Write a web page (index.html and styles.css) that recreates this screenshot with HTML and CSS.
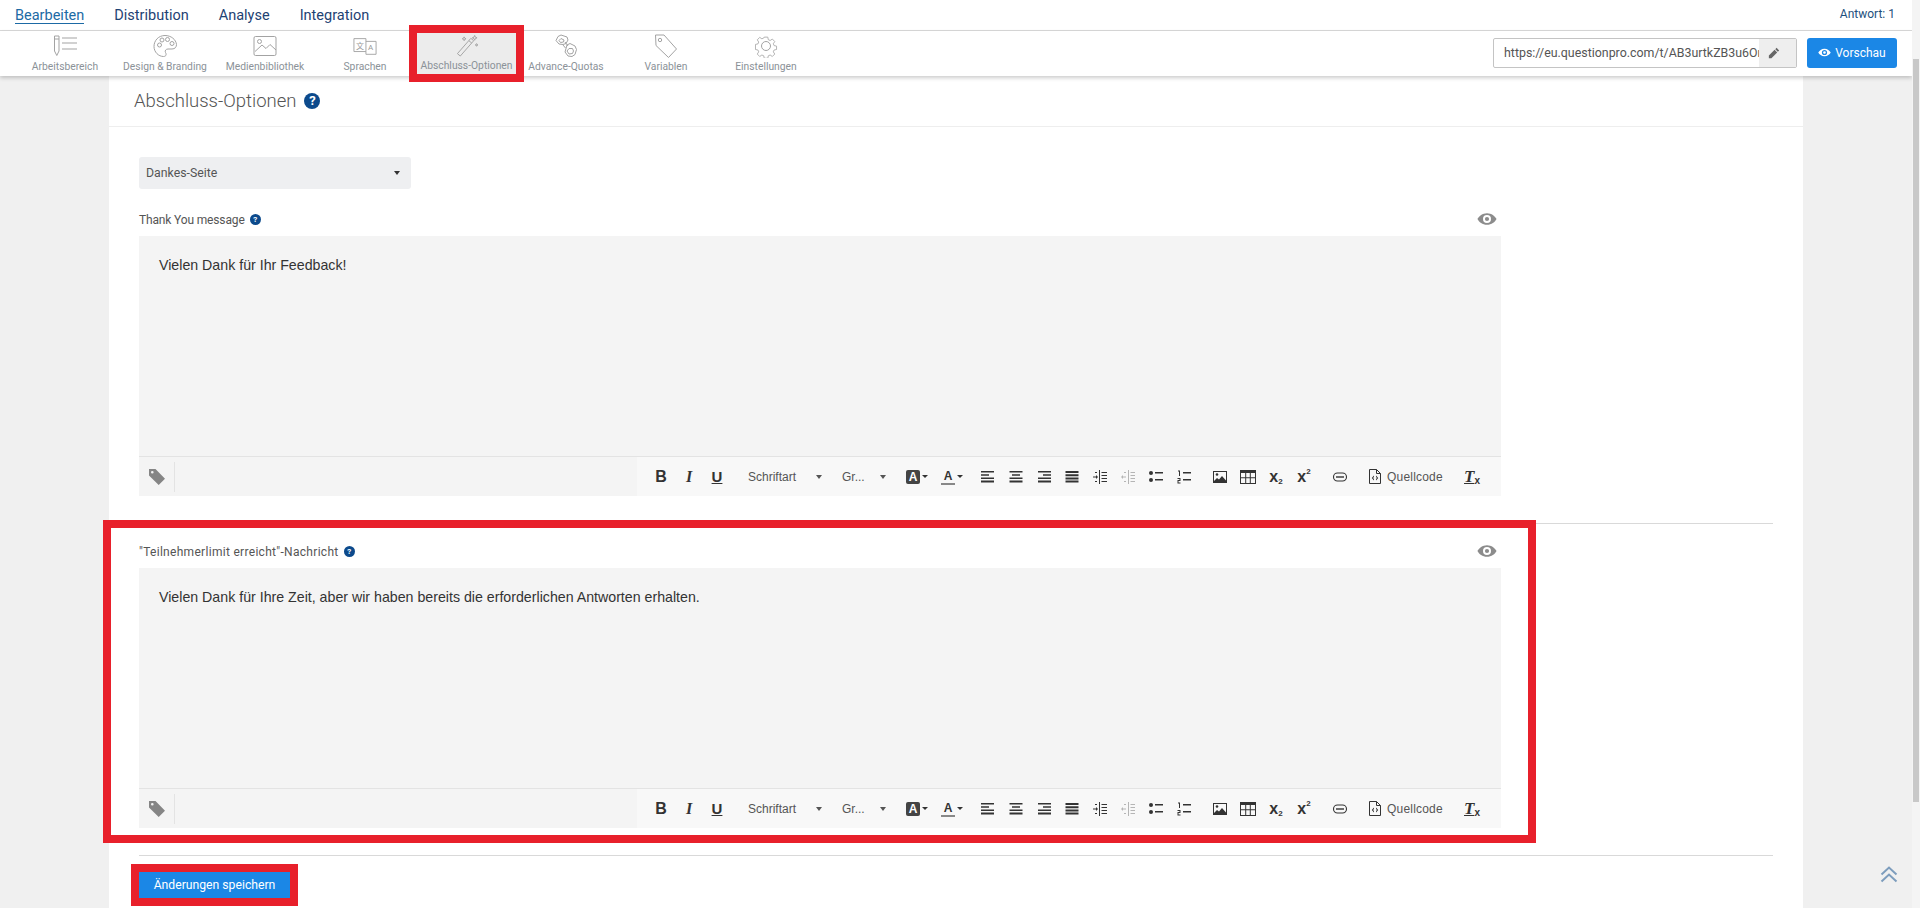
FILE: index.html
```html
<!DOCTYPE html>
<html lang="de">
  <head>
    <meta charset="UTF-8" />
    <title>Abschluss-Optionen</title>
    <meta name="viewport" content="width=device-width, initial-scale=1.0" />
    <link rel="stylesheet" href="styles.css">
  </head>
  <body>
    <svg class="sprite" width="0" height="0">
      <symbol id="i-eye" viewBox="0 0 24 16"><path fill-rule="evenodd" d="M12 1C6.500 1 2.500 4.500.5 8c2 3.500 6 7 11.500 7s9.500-3.500 11.500-7c-2-3.500-6-7-11.500-7zm0 2.200a4.800 4.800 0 1 1 0 9.600 4.800 4.800 0 0 1 0-9.600zm0 2.300a2.500 2.500 0 1 0 0 5 2.500 2.500 0 0 0 0-5z"/></symbol>
      <symbol id="i-tag" viewBox="0 0 18 18"><path fill-rule="evenodd" d="M1 1h6.500l9.500 9.700L10.700 17 1 7.500zm3.300 2a1.300 1.300 0 1 0 0 2.600 1.300 1.300 0 0 0 0-2.600z"/></symbol>
      <symbol id="i-left" viewBox="0 0 14 14"><path d="M0 1h13v1.500H0zM0 4.200h8v1.500H0zM0 7.400h13v1.500H0zM0 10.600h13v2H0z"/></symbol>
      <symbol id="i-center" viewBox="0 0 14 14"><path d="M.5 1h13v1.500H.5zM3 4.200h8v1.500H3zM.5 7.400h13v1.500H.5zM.5 10.600h13v2H.5z"/></symbol>
      <symbol id="i-right" viewBox="0 0 14 14"><path d="M1 1h13v1.500H1zM6 4.200h8v1.500H6zM1 7.400h13v1.500H1zM1 10.600h13v2H1z"/></symbol>
      <symbol id="i-justify" viewBox="0 0 14 14"><path d="M.5 1h13v2H.5zM.5 4.200h13v2H.5zM.5 7.400h13v2H.5zM.5 10.600h13v2H.5z"/></symbol>
      <symbol id="i-indent" viewBox="0 0 14 14"><path d="M6 0h1v14H6zM8.500 2H14v1H8.500zM8.500 5H14v1H8.500zM8.500 8H14v1H8.500zM8.500 11H14v1H8.500zM0 6.500h3V5l2 2-2 2V7.500H0zM2 2h2v1H2zM2 11h2v1H2z"/></symbol>
      <symbol id="i-outdent" viewBox="0 0 14 14"><path d="M7 0h1v14H7zM9.500 2H14v1H9.500zM9.500 5H14v1H9.500zM9.500 8H14v1H9.500zM9.500 11H14v1H9.500zM5 6.500H2V5L0 7l2 2V7.500h3zM3 2h2v1H3zM3 11h2v1H3z"/></symbol>
      <symbol id="i-ul" viewBox="0 0 14 14"><circle cx="2" cy="3" r="2"/><circle cx="2" cy="10" r="2"/><path d="M6 2h8v1.500H6zM6 9h8v1.500H6z"/></symbol>
      <symbol id="i-ol" viewBox="0 0 14 14"><path d="M6 2h8v1.500H6zM6 9h8v1.500H6zM1 .5h2V6H2V1.500H1zM.5 8h3v3h-2v1.500h2v1h-3V10h2V9h-2z"/></symbol>
      <symbol id="i-image" viewBox="0 0 14 12"><path fill-rule="evenodd" d="M0 0h14v12H0zm1 1v10h12V1z"/><circle cx="4" cy="3.500" r="1.300"/><path d="M1 10l3-3 2 1.500L9 5l4 4.500V11H1z"/></symbol>
      <symbol id="i-table" viewBox="0 0 16 14"><path fill-rule="evenodd" d="M0 0h16v14H0zm1 3v4.300h4.200V3zm5.200 0v4.300h3.600V3zm4.600 0v4.300H15V3zM1 8.300V13h4.200V8.300zm5.200 0V13h3.600V8.300zm4.600 0V13H15V8.300z"/></symbol>
      <symbol id="i-link" viewBox="0 0 16 14"><rect x="1.500" y="3" width="13" height="8" rx="4" fill="none" stroke="currentColor" stroke-width="1.100"/><path d="M4 6.300h8v1.400H4z"/></symbol>
      <symbol id="i-source" viewBox="0 0 12 15"><path fill="none" stroke="currentColor" d="M.5.500h7l4 4v10H.5zM7.500.500v4h4"/><path d="M5 6.500L2.800 9 5 11.500V10L4 9l1-1zM7 6.500L9.200 9 7 11.500V10l1-1-1-1z"/></symbol>
    </svg>

    <header class="topbar">
      <nav class="main-tabs">
        <a class="active">Bearbeiten</a>
        <a>Distribution</a>
        <a>Analyse</a>
        <a>Integration</a>
      </nav>
      <span class="answers">Antwort: 1</span>
    </header>

    <div class="toolbar">
      <div class="tool">
        <svg viewBox="0 0 24 24"><path d="M1.500 2h4.500v15l-2.200 4.500L1.500 17zM1.500 5h4.500M9 4h15M9 9h15M9 15h15"/></svg>
        <span>Arbeitsbereich</span>
      </div>
      <div class="tool">
        <svg viewBox="0 0 24 24"><path d="M12 1.500C5.500 1.500 1 6.500 1 12.500c0 5.500 4.500 10 9.500 10 3 0 3-2.500 2-4-1-1.800.5-3.500 2.500-3.500h4c3 0 4.500-2 4.500-4.500C23 5.500 18 1.500 12 1.500z"/><circle cx="6.500" cy="11" r="2"/><circle cx="9" cy="6" r="2"/><circle cx="14.500" cy="5.500" r="2"/><circle cx="19" cy="9.500" r="2"/></svg>
        <span>Design &amp; Branding</span>
      </div>
      <div class="tool">
        <svg viewBox="0 0 24 24"><rect x="1" y="2.500" width="22" height="19" rx="1.500"/><circle cx="6.500" cy="7.500" r="2"/><path d="M2 17.500l7-6.500 4 3.500 4-4 6 5.500"/></svg>
        <span>Medienbibliothek</span>
      </div>
      <div class="tool">
        <svg viewBox="0 0 26 24"><path d="M1 4h13v14H1zM14 7h11v14H14v-3"/></svg>
        <b class="cjk">文</b><b class="lat">A</b>
        <span>Sprachen</span>
      </div>
      <div class="tool current">
        <svg viewBox="0 0 24 24"><path d="M2 20.500L16 4.500l3 2.500L5 23zM14 7l3 2.500M20 1.500l.7 1.800 1.800.7-1.800.7-.7 1.800-.7-1.800-1.800-.7 1.800-.7zM9 3l.6 1.400L11 5l-1.400.6L9 7l-.6-1.400L7 5l1.400-.6zM22 10l.4 1 1 .4-1 .4-.4 1-.4-1-1-.4 1-.4z"/></svg>
        <span>Abschluss-Optionen</span>
      </div>
      <div class="tool">
        <svg viewBox="0 0 24 24"><path d="M4 2.500l3-1.500 6 2 1 3-2 3.500-3 1-4-.5-3-3.500zM7 4.500l-2 2 1.500 2 3-.5.500-2zM13 11l3-1.500 5 2.500 1.500 3.500-1.500 5-3 2-4-.5-3-4zM15 14.500l-2 2.500 2 3 3.500-.5 1-2.500-1-2.500zM11 8l3 4M9 11l2.500 3"/></svg>
        <span>Advance-Quotas</span>
      </div>
      <div class="tool">
        <svg viewBox="0 0 24 24"><path d="M1.500 1h8.500l12.500 14-8 8.500L2 11.500z"/><circle cx="6" cy="6" r="1.700"/></svg>
        <span>Variablen</span>
      </div>
      <div class="tool">
        <svg viewBox="0 0 24 24"><circle cx="12" cy="12" r="4.500"/><path d="M9.800 1h4.400l.6 3.200 2.300 1 2.700-1.800 3 3.100-1.800 2.700 1 2.300 3 .6v4.200l-3 .6-1 2.300 1.800 2.700-3 3-2.700-1.800-2.300 1-.6 3H9.800l-.6-3-2.300-1-2.700 1.800-3-3 1.800-2.700-1-2.300-3-.6V10l3-.6 1-2.300-1.800-2.700 3-3.100 2.700 1.800 2.300-1z" transform="translate(2.300 2.300) scale(.81)"/></svg>
        <span>Einstellungen</span>
      </div>

      <div class="url-box">
        <span class="url-text">https://eu.questionpro.com/t/AB3urtkZB3u6Om</span>
        <span class="url-edit">
          <svg viewBox="0 0 14 14"><path d="M10 1l3 3-1.500 1.500-3-3zM7.700 3.300l3 3L4 13H1v-3z"/></svg>
        </span>
      </div>
      <button class="preview-btn">
        <svg class="eye"><use href="#i-eye"/></svg>
        Vorschau
      </button>
    </div>

    <main class="card">
      <div class="card-title">
        <h1>Abschluss-Optionen</h1>
        <span class="help big">?</span>
      </div>

      <div class="card-body">
        <div class="select-box">
          <span>Dankes-Seite</span>
          <i class="caret"></i>
        </div>

        <div class="field-head first">
          <label>Thank You message</label>
          <span class="help">?</span>
          <svg class="field-eye"><use href="#i-eye"/></svg>
        </div>
        <div class="editor">
          <div class="editor-text">Vielen Dank für Ihr Feedback!</div>
          <div class="editor-foot">
            <div class="tag-slot"><svg><use href="#i-tag"/></svg></div>
            <div class="rte">
              <span class="rb txt-b">B</span><span class="rb txt-i">I</span><span class="rb txt-u">U</span>
              <span class="rcombo font">Schriftart<i class="caret"></i></span>
              <span class="rcombo size">Gr...<i class="caret"></i></span>
              <span class="rcolor bg"><b>A</b><i class="caret"></i></span>
              <span class="rcolor fg"><b>A</b><i class="caret"></i></span>
              <span class="rb"><svg><use href="#i-left"/></svg></span>
              <span class="rb"><svg><use href="#i-center"/></svg></span>
              <span class="rb"><svg><use href="#i-right"/></svg></span>
              <span class="rb"><svg><use href="#i-justify"/></svg></span>
              <span class="rb"><svg><use href="#i-indent"/></svg></span>
              <span class="rb off"><svg><use href="#i-outdent"/></svg></span>
              <span class="rb"><svg><use href="#i-ul"/></svg></span>
              <span class="rb"><svg><use href="#i-ol"/></svg></span>
              <span class="rb gap"><svg><use href="#i-image"/></svg></span>
              <span class="rb"><svg class="wide"><use href="#i-table"/></svg></span>
              <span class="rb txt-x">x<sub>2</sub></span>
              <span class="rb txt-x">x<sup>2</sup></span>
              <span class="rb gap"><svg class="wide"><use href="#i-link"/></svg></span>
              <span class="rsource"><svg><use href="#i-source"/></svg>Quellcode</span>
              <span class="rb txt-t"><u>T</u><small>x</small></span>
            </div>
          </div>
        </div>

        <hr class="divider first-line" />

        <section class="limit-block">
          <div class="field-head">
            <label class="spaced">"Teilnehmerlimit erreicht"-Nachricht</label>
            <span class="help">?</span>
            <svg class="field-eye"><use href="#i-eye"/></svg>
          </div>
          <div class="editor">
            <div class="editor-text">Vielen Dank für Ihre Zeit, aber wir haben bereits die erforderlichen Antworten erhalten.</div>
            <div class="editor-foot">
              <div class="tag-slot"><svg><use href="#i-tag"/></svg></div>
              <div class="rte">
                <span class="rb txt-b">B</span><span class="rb txt-i">I</span><span class="rb txt-u">U</span>
                <span class="rcombo font">Schriftart<i class="caret"></i></span>
                <span class="rcombo size">Gr...<i class="caret"></i></span>
                <span class="rcolor bg"><b>A</b><i class="caret"></i></span>
                <span class="rcolor fg"><b>A</b><i class="caret"></i></span>
                <span class="rb"><svg><use href="#i-left"/></svg></span>
                <span class="rb"><svg><use href="#i-center"/></svg></span>
                <span class="rb"><svg><use href="#i-right"/></svg></span>
                <span class="rb"><svg><use href="#i-justify"/></svg></span>
                <span class="rb"><svg><use href="#i-indent"/></svg></span>
                <span class="rb off"><svg><use href="#i-outdent"/></svg></span>
                <span class="rb"><svg><use href="#i-ul"/></svg></span>
                <span class="rb"><svg><use href="#i-ol"/></svg></span>
                <span class="rb gap"><svg><use href="#i-image"/></svg></span>
                <span class="rb"><svg class="wide"><use href="#i-table"/></svg></span>
                <span class="rb txt-x">x<sub>2</sub></span>
                <span class="rb txt-x">x<sup>2</sup></span>
                <span class="rb gap"><svg class="wide"><use href="#i-link"/></svg></span>
                <span class="rsource"><svg><use href="#i-source"/></svg>Quellcode</span>
                <span class="rb txt-t"><u>T</u><small>x</small></span>
              </div>
            </div>
          </div>
        </section>

        <hr class="divider second-line" />

        <button class="save-btn">Änderungen speichern</button>
      </div>
    </main>

    <a class="to-top">
      <svg viewBox="0 0 18 17"><path d="M1.500 8.500L9 1.500l7.500 7M1.500 15.500L9 8.500l7.500 7"/></svg>
    </a>
    <div class="scrollbar"><div class="scroll-thumb"></div></div>
  </body>
</html>
```

FILE: styles.css
```css
html,
body {
  height: 908px;
  overflow: hidden;
}

body {
  margin: 0;
  padding-right: 8px;
  background-color: #f0f0f0;
  font-family: Roboto, 'Noto Sans', sans-serif;
  color: #555;
}

.sprite {
  position: absolute;
}

/* top bars */
.topbar {
  height: 30px;
  background: white;
  border-bottom: 1px solid #d9d9d9;
  display: flex;
  justify-content: space-between;
  padding: 0 17px 0 15px;
}

.main-tabs {
  display: flex;
  gap: 30px;
}

.main-tabs a {
  height: 23px;
  line-height: 31px;
  font-size: 14.5px;
  color: #1e4273;
}

.main-tabs a.active {
  color: #1c6aa5;
  border-bottom: 1px solid #1c6aa5;
}

.answers {
  line-height: 29px;
  font-size: 12px;
  color: #1e4f7d;
}

.toolbar {
  position: relative;
  height: 45px;
  background: white;
  box-shadow: 0 2px 4px rgba(0, 0, 0, 0.2);
  display: flex;
  padding: 0 15px;
}

.tool {
  position: relative;
  width: 100px;
  display: flex;
  flex-direction: column;
  align-items: center;
  padding-top: 3px;
}

.tool svg {
  width: 24px;
  height: 24px;
  fill: none;
  stroke: #a3a3a3;
  stroke-width: 1;
}

.tool span {
  margin-top: 1px;
  font-size: 10.3px;
  line-height: 16px;
  color: #8b9298;
  white-space: nowrap;
}

.tool b {
  position: absolute;
  top: 9px;
  font-size: 8px;
  font-weight: normal;
  color: #999;
}

.tool .cjk {
  left: 41px;
  font-family: 'Noto Sans CJK SC', sans-serif;
}

.tool .lat {
  left: 53px;
  top: 12px;
}

.tool.current {
  width: 99px;
  margin: 2px 0 2px 2px;
  padding-top: 1px;
  background: #ececec;
  outline: 8px solid #e8202b;
}

.url-box {
  margin: 7px 0 0 auto;
  width: 304px;
  height: 30px;
  box-sizing: border-box;
  border: 1px solid #c4c4c4;
  border-radius: 2px;
  display: flex;
}

.url-text {
  flex: 1;
  overflow: hidden;
  padding-left: 10px;
  font-size: 12.4px;
  line-height: 28px;
  color: #555;
  white-space: nowrap;
}

.url-edit {
  flex: 0 0 37px;
  box-sizing: border-box;
  padding-right: 7px;
  background: #eee;
  display: flex;
  align-items: center;
  justify-content: center;
}

.url-edit svg {
  width: 12px;
  height: 12px;
  fill: #666;
}

.preview-btn {
  margin: 7px 0 0 10px;
  width: 90px;
  height: 30px;
  padding: 0;
  border: none;
  border-radius: 3px;
  background-color: #1b87e6;
  color: white;
  font-family: inherit;
  font-size: 12px;
}

.eye {
  width: 13px;
  height: 9px;
  margin-right: 1px;
  fill: white;
}

/* card */
.card {
  margin: 0 109px;
  height: 832px;
  background: white;
}

.card-title {
  height: 50px;
  border-bottom: 1px solid #eee;
  display: flex;
  align-items: center;
  gap: 8px;
  padding-left: 25px;
}

h1 {
  margin: 0;
  font-size: 18.5px;
  font-weight: 300;
  color: #555;
}

.help {
  width: 11px;
  height: 11px;
  border-radius: 50%;
  background: #0c4a8c;
  color: white;
  font-size: 8px;
  font-weight: 700;
  line-height: 11px;
  text-align: center;
}

.help.big {
  width: 16px;
  height: 16px;
  font-size: 13px;
  line-height: 16px;
}

.card-body {
  padding: 30px 30px 0;
}

.select-box {
  width: 272px;
  height: 32px;
  box-sizing: border-box;
  background: #eeeff1;
  border-radius: 3px;
  display: flex;
  align-items: center;
  justify-content: space-between;
  padding: 0 11px 0 7px;
  font-size: 12.3px;
  color: #555;
}

.caret {
  display: inline-block;
  width: 0;
  height: 0;
  border-left: 3.5px solid transparent;
  border-right: 3.5px solid transparent;
  border-top: 4px solid #333;
}

.field-head {
  width: 1362px;
  height: 17px;
  margin-bottom: 8px;
  display: flex;
  align-items: center;
  gap: 5px;
  font-size: 12px;
  letter-spacing: -0.15px;
  color: #555;
}

.field-head .spaced {
  letter-spacing: 0.3px;
}

.field-head.first {
  margin-top: 22px;
}

.field-eye {
  width: 20px;
  height: 14px;
  margin: -2px 4px 0 auto;
  fill: #8c8c8c;
}

.editor {
  width: 1362px;
  height: 260px;
  background: #f4f4f4;
  display: flex;
  flex-direction: column;
}

.editor-text {
  flex: 1;
  padding: 21px 20px;
  font-family: 'Liberation Sans', Arial, sans-serif;
  font-size: 14.2px;
  line-height: 17px;
  color: #333;
}

.editor-foot {
  height: 39px;
  border-top: 1px solid #e3e3e3;
  display: flex;
}

.tag-slot {
  width: 36px;
  height: 30px;
  margin-top: 5px;
  border-right: 1px solid #e3e3e3;
  display: flex;
  align-items: center;
  padding-left: 9px;
  box-sizing: border-box;
}

.tag-slot svg {
  width: 18px;
  height: 18px;
  fill: #858585;
}

/* rich text buttons */
.rte {
  margin-left: auto;
  width: 864px;
  box-sizing: border-box;
  background: #f8f8f8;
  display: flex;
  align-items: center;
  padding-left: 10px;
  color: #333;
}

.rb {
  width: 28px;
  height: 24px;
  flex: none;
  display: flex;
  align-items: center;
  justify-content: center;
  font-family: 'Liberation Sans', Arial, sans-serif;
  font-size: 16px;
}

.rb svg {
  width: 14px;
  height: 14px;
  fill: #333;
  color: #333;
}

.rb svg.wide {
  width: 16px;
}

.rb.off svg {
  fill: #b5b5b5;
}

.rb.gap {
  margin-left: 8px;
}

.txt-b {
  font-weight: 700;
}

.txt-i {
  font-family: 'Liberation Serif', serif;
  font-style: italic;
  font-weight: 700;
}

.txt-u {
  font-weight: 700;
  font-size: 15px;
  text-decoration: underline;
}

.txt-x {
  font-weight: 700;
}

.txt-x sub,
.txt-x sup {
  font-size: 8px;
  line-height: 0;
}

.txt-x sub {
  margin-top: 10px;
}

.txt-x sup {
  margin-bottom: 10px;
}

.txt-t {
  margin-left: 7px;
  font-family: 'Liberation Serif', serif;
  font-style: italic;
  font-weight: 700;
  font-size: 17px;
}

.txt-t small {
  font-family: 'Liberation Sans', sans-serif;
  font-style: normal;
  font-size: 10px;
  margin-top: 7px;
}

.rcombo {
  display: flex;
  align-items: center;
  justify-content: space-between;
  flex: none;
  height: 24px;
  box-sizing: border-box;
  font-family: 'Liberation Sans', Arial, sans-serif;
  font-size: 12px;
  color: #555;
}

.rcombo .caret {
  border-top-color: #555;
}

.rcombo.font {
  width: 74px;
  margin-left: 17px;
}

.rcombo.size {
  width: 44px;
  margin-left: 20px;
}

.rcolor {
  display: flex;
  align-items: center;
  gap: 2px;
  flex: none;
  font-family: 'Liberation Sans', Arial, sans-serif;
  font-size: 12px;
}

.rcolor .caret {
  border-left-width: 3px;
  border-right-width: 3px;
  border-top-width: 3px;
}

.rcolor.bg {
  margin-left: 20px;
}

.rcolor.bg b {
  width: 14px;
  height: 14px;
  background: #444;
  border-radius: 2px;
  color: white;
  text-align: center;
  line-height: 14px;
}

.rcolor.fg {
  margin-left: 13px;
  margin-right: 11px;
}

.rcolor.fg b {
  width: 14px;
  line-height: 14px;
  text-align: center;
  border-bottom: 2px solid #888;
}

.rsource {
  display: flex;
  align-items: center;
  gap: 6px;
  flex: none;
  width: 82px;
  margin-left: 15px;
  font-family: 'Liberation Sans', Arial, sans-serif;
  font-size: 12px;
  letter-spacing: 0.2px;
  color: #555;
}

.rsource svg {
  width: 12px;
  height: 15px;
  fill: #333;
  color: #333;
}

.divider {
  width: 1634px;
  height: 1px;
  margin: 0;
  border: none;
  background: #d9d9d9;
}

.divider.first-line {
  margin-top: 27px;
}

.divider.second-line {
  margin-top: 20px;
}

/* the two marked blocks */
.limit-block {
  width: 1362px;
  margin: 4px 0 0 -28px;
  padding: 15px 27px 7px 28px;
  outline: 8px solid #e8202b;
}

.save-btn {
  display: block;
  width: 151px;
  height: 26px;
  margin-top: 16px;
  padding: 0;
  border: none;
  background-color: #1b87e6;
  color: white;
  font-family: inherit;
  font-size: 12.2px;
  outline: 8px solid #e8202b;
}

/* floating */
.to-top {
  position: absolute;
  left: 1880px;
  top: 866px;
}

.to-top svg {
  width: 18px;
  height: 17px;
  fill: none;
  stroke: #7d9dbd;
  stroke-width: 2;
}

.scrollbar {
  position: absolute;
  top: 0;
  right: 0;
  width: 8px;
  height: 908px;
  background: #f4f4f4;
}

.scroll-thumb {
  margin: 59px 1px 0;
  height: 743px;
  background: #c8c8c8;
}
```
